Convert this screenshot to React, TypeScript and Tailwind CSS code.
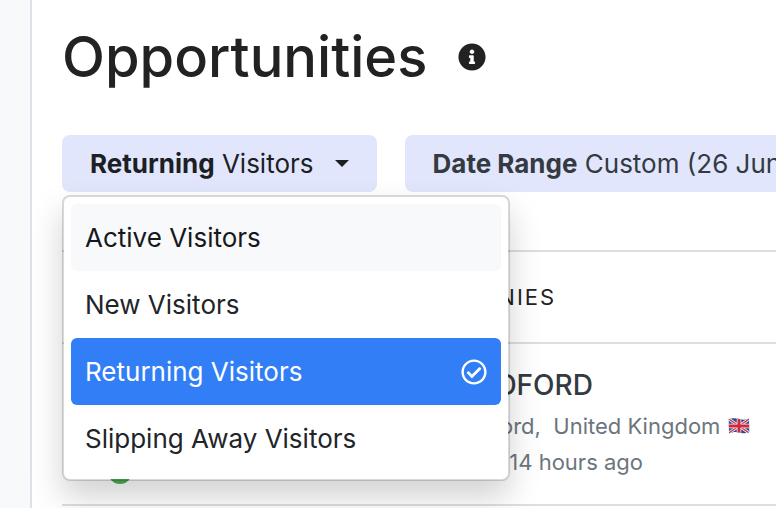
import React, { useState } from 'react';
import { FaInfoCircle, FaRegCheckCircle } from 'react-icons/fa';

const segments = ['Active Visitors', 'New Visitors', 'Returning Visitors', 'Slipping Away Visitors'];

const companies = [
  { name: 'BRADFORD', city: 'Bradford', country: 'United Kingdom', lastSeen: '14 hours ago' },
];

const FlagUK = () => (
  <svg viewBox="0 0 44 32" className="inline-block h-4 w-[22px]" role="img" aria-label="United Kingdom flag">
    <defs>
      <clipPath id="flag-wave">
        <path d="M1 3 C9 -1 15 0 22 2 S36 4 42 1 L43 28 C36 32 29 31 22 29 S9 28 2 31 Z" />
      </clipPath>
    </defs>
    <g clipPath="url(#flag-wave)">
      <rect width="44" height="32" fill="#2a4a94" />
      <path d="M0 1 L44 31 M44 1 L0 31" stroke="#f1f1f4" strokeWidth="6" />
      <path d="M0 1 L44 31 M44 1 L0 31" stroke="#d3283c" strokeWidth="2.5" />
      <path d="M22 0 V32 M0 16 H44" stroke="#f1f1f4" strokeWidth="9" />
      <path d="M22 0 V32 M0 16 H44" stroke="#d3283c" strokeWidth="6" />
    </g>
  </svg>
);

const SegmentDropdown = () => {
  const [open, setOpen] = useState(true);
  const [selected, setSelected] = useState('Returning Visitors');
  const [hovered, setHovered] = useState('Active Visitors');

  const handleSelect = (segment: string) => {
    setSelected(segment);
    setOpen(false);
  };

  const itemClass = (segment: string) => {
    if (segment === selected) return 'bg-[#317ef6] text-white';
    if (segment === hovered) return 'bg-[#f8f9fb] text-[#16181b]';
    return 'text-[#212529]';
  };

  return (
    <div className="relative shrink-0">
      <button
        type="button"
        aria-haspopup="true"
        aria-expanded={open}
        onClick={() => setOpen(!open)}
        className="flex items-center gap-[21px] rounded-lg bg-[#e1e6fc] px-7 py-[9px] leading-[39px] text-[#1c2024]"
      >
        <span>
          <strong className="font-bold">{selected.replace(' Visitors', '')}</strong> Visitors
        </span>
        <svg viewBox="0 0 14 7" className="h-[7px] w-3.5" fill="currentColor" aria-hidden="true">
          <path d="M0 0 H14 L7 7 Z" />
        </svg>
      </button>

      {open && (
        <ul className="absolute left-0 top-full z-10 mt-[3px] w-[448px] rounded-lg border-2 border-black/15 bg-white bg-clip-padding p-[7px] shadow-[0_16px_32px_rgba(0,0,0,0.18)]">
          {segments.map((segment) => (
            <li key={segment}>
              <button
                type="button"
                onClick={() => handleSelect(segment)}
                onMouseEnter={() => setHovered(segment)}
                className={`flex w-full items-center justify-between rounded-md px-3.5 py-3.5 text-left leading-[39px] ${itemClass(segment)}`}
              >
                {segment}
                {segment === selected && <FaRegCheckCircle size={26} aria-hidden="true" />}
              </button>
            </li>
          ))}
        </ul>
      )}
    </div>
  );
};

const App = () => {
  return (
    <div className="flex min-h-screen overflow-hidden bg-white font-['Inter',sans-serif] text-[26px] text-[#222]">
      <aside className="w-8 shrink-0 border-r-2 border-[#dfe1ea] bg-[#f8f9fb]" />

      <main className="min-w-0 flex-1 pl-[30px] pt-[22px]">
        <header className="flex items-center gap-[31px]">
          <h1 className="text-[56px] font-medium leading-[70px]">Opportunities</h1>
          <FaInfoCircle size={28} aria-label="About opportunities" />
        </header>

        <div className="mt-[43px] flex gap-7">
          <SegmentDropdown />
          <button
            type="button"
            className="shrink-0 whitespace-nowrap rounded-lg bg-[#e1e6fc] px-7 py-[9px] leading-[39px] text-[#343a40]"
          >
            <strong className="font-bold">Date Range</strong> Custom (26 Jun - 26 Jul)
          </button>
        </div>

        <table className="mt-[58px] w-full border-t-2 border-[#dedede] text-left">
          <thead>
            <tr className="border-b-2 border-[#dedede]">
              <th className="w-[346px] pl-4" aria-label="Status" />
              <th className="pb-7 pt-7 text-[22px] font-normal uppercase leading-[34px] tracking-[2px]">Companies</th>
            </tr>
          </thead>
          <tbody>
            {companies.map((company) => (
              <tr key={company.name} className="border-b-2 border-[#dedede]">
                <td className="pl-4">
                  <div className="relative size-14 rounded-full bg-[#e9ecef]">
                    <span className="absolute -bottom-8 right-0.5 size-6 rounded-full bg-[#4caf50]" />
                  </div>
                </td>
                <td className="whitespace-nowrap pb-6 pt-[23px]">
                  <div className="pl-8">
                    <p className="text-[28px] font-medium leading-9 text-[#343a40]">{company.name}</p>
                    <div className="mt-[5px] text-[22px] leading-9 text-[#6c757d]">
                      <p className="flex items-center gap-2 pl-1">
                        <span>
                          {company.city},&nbsp; {company.country}
                        </span>
                        <FlagUK />
                      </p>
                      <p className="pl-1">
                        Seen: <time>{company.lastSeen}</time>
                      </p>
                    </div>
                  </div>
                </td>
              </tr>
            ))}
          </tbody>
        </table>
      </main>
    </div>
  );
};

export default App;
